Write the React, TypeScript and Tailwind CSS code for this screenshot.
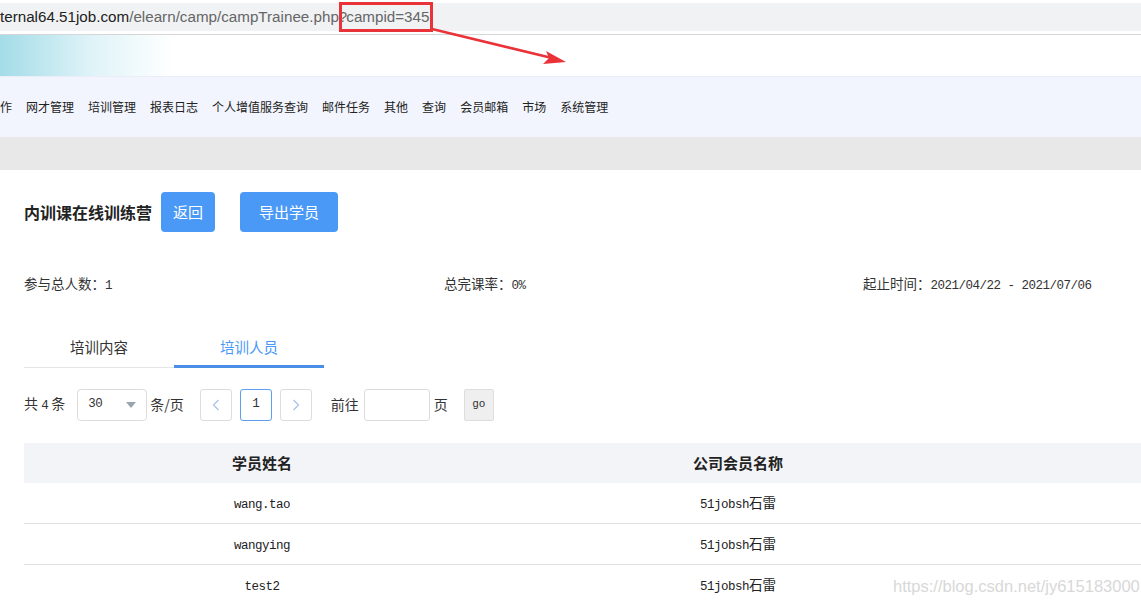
import React from "react";

const navItems = [
  "作",
  "网才管理",
  "培训管理",
  "报表日志",
  "个人增值服务查询",
  "邮件任务",
  "其他",
  "查询",
  "会员邮箱",
  "市场",
  "系统管理",
];

const rows = [
  { name: "wang.tao", company: "51jobsh" },
  { name: "wangying", company: "51jobsh" },
  { name: "test2", company: "51jobsh" },
];

const cjk = "font-['Noto_Sans_CJK_SC',sans-serif]";
const mono = "font-['Liberation_Mono','Noto_Sans_CJK_SC',monospace]";

function Mono({ children }: { children: React.ReactNode }) {
  return <span className={`${mono} text-[12.5px] tracking-[-0.5px]`}>{children}</span>;
}

export default function App() {
  return (
    <div className={`relative w-[1141px] h-[604px] overflow-hidden bg-white text-[#333] ${cjk}`}>
      {/* address bar */}
      <div className="pt-[3px]">
        <div className="h-[28px] bg-[#f1f2f4] flex items-center font-['Liberation_Sans',sans-serif] text-[15.2px] whitespace-nowrap">
          <span className="text-[#222]">ternal64.51job.com</span>
          <span className="text-[#666]">/elearn/camp/campTrainee.php?</span>
          <span className="text-[#666] outline-[3px] outline-solid outline-[#ea3338] -ml-[5px] pl-[4px] pr-[1px] py-[1px]">campid=345</span>
        </div>
        <div className="h-[3px]" />
        <div className="h-px bg-[#d6d6d6]" />
      </div>

      {/* banner */}
      <div className="h-[41px] bg-gradient-to-r from-[#a3dce7] via-[#def3f8] via-[25%] to-white to-[48%] w-[360px]" />

      {/* nav */}
      <nav className="h-[61px] bg-[#f2f5fd] border-t border-[#e9edf7] flex items-center gap-[14px] text-[12px] text-[#222] whitespace-nowrap">
        {navItems.map((n) => (
          <span key={n}>{n}</span>
        ))}
      </nav>
      <div className="h-[33px] bg-[#e8e8e8]" />

      {/* content */}
      <div className="pl-[24px]">
        <div className="flex items-center mt-[22px] h-[40px]">
          <h1 className="text-[16px] font-bold text-[#222] mr-[9px]">内训课在线训练营</h1>
          <button className="h-[40px] w-[54px] rounded-[4px] bg-[#4a99f7] text-white text-[15px]">返回</button>
          <button className="ml-[25px] h-[40px] w-[98px] rounded-[4px] bg-[#4a99f7] text-white text-[15px]">导出学员</button>
        </div>

        <div className="flex items-center mt-[41px] h-[22px] text-[13.5px] text-[#333] whitespace-nowrap">
          <div className="w-[420px]">参与总人数：<Mono>1</Mono></div>
          <div className="w-[419px]">总完课率：<Mono>0%</Mono></div>
          <div>
            起止时间：<Mono>2021/04/22 - 2021/07/06</Mono>
          </div>
        </div>

        {/* tabs */}
        <div className="flex mt-[32px] text-[14.5px]">
          <div className="w-[150px] h-[41px] flex items-center justify-center border-b border-[#e6e6e6] text-[#333]">培训内容</div>
          <div className="w-[150px] h-[41px] flex items-center justify-center border-b-[3px] border-[#4a8ee8] text-[#4a99f7] pt-[2px]">培训人员</div>
        </div>

        {/* pagination */}
        <div className="flex items-center mt-[20px] h-[33px] text-[14px] text-[#333] whitespace-nowrap">
          <span>共 <Mono>4</Mono> 条</span>
          <div className="ml-[12px] w-[70px] h-[32px] border border-[#dcdcdc] rounded-[4px] flex items-center justify-between px-[10px]">
            <Mono>30</Mono>
            <svg width="10" height="6" viewBox="0 0 10 6">
              <path d="M0 0 L10 0 L5 6 Z" fill="#9aa3b0" />
            </svg>
          </div>
          <span className="ml-[3px]">条/页</span>
          <div className="ml-[16px] w-[32px] h-[32px] border border-[#dcdcdc] rounded-[3px] flex items-center justify-center">
            <svg width="8" height="12" viewBox="0 0 8 12">
              <path d="M6.5 1 L1.5 6 L6.5 11" fill="none" stroke="#a9c4ea" strokeWidth="1.3" />
            </svg>
          </div>
          <div className="ml-[8px] w-[32px] h-[32px] border border-[#5d9ff0] rounded-[3px] flex items-center justify-center">
            <Mono>1</Mono>
          </div>
          <div className="ml-[8px] w-[32px] h-[32px] border border-[#dcdcdc] rounded-[3px] flex items-center justify-center">
            <svg width="8" height="12" viewBox="0 0 8 12">
              <path d="M1.5 1 L6.5 6 L1.5 11" fill="none" stroke="#a9c4ea" strokeWidth="1.3" />
            </svg>
          </div>
          <span className="ml-[19px]">前往</span>
          <div className="ml-[5px] w-[66px] h-[32px] border border-[#dcdcdc] rounded-[3px]" />
          <span className="ml-[4px]">页</span>
          <div className="ml-[16px] w-[30px] h-[32px] bg-[#efefef] border border-[#dedede] rounded-[2px] flex items-center justify-center">
            <span className={`${mono} text-[11px]`}>go</span>
          </div>
        </div>

        {/* table */}
        <div className="mt-[22px] w-[1428px]">
          <div className="grid grid-cols-3 h-[40px] bg-[#f3f4f8] items-center text-center text-[15px] font-bold text-[#222]">
            <div>学员姓名</div>
            <div>公司会员名称</div>
            <div />
          </div>
          {rows.map((r) => (
            <div key={r.name} className="grid grid-cols-3 h-[41px] border-b border-[#e2e2e2] items-center text-center text-[13.5px] text-[#222]">
              <div><Mono>{r.name}</Mono></div>
              <div>
                <Mono>{r.company}</Mono>石雷
              </div>
              <div />
            </div>
          ))}
        </div>
      </div>

      {/* annotation arrow */}
      <svg className="absolute left-0 top-0 pointer-events-none" width="600" height="80">
        <line x1="432" y1="29" x2="552" y2="58" stroke="#ea3338" strokeWidth="2.5" />
        <path d="M566 62 L546 51 L549 58 L543 64 Z" fill="#ea3338" />
      </svg>

      <div className="absolute left-[893px] top-[574px] text-[16.5px] text-[#d8d8d8] font-['Liberation_Sans',sans-serif] pointer-events-none">
        https://blog.csdn.net/jy615183000
      </div>
    </div>
  );
}
